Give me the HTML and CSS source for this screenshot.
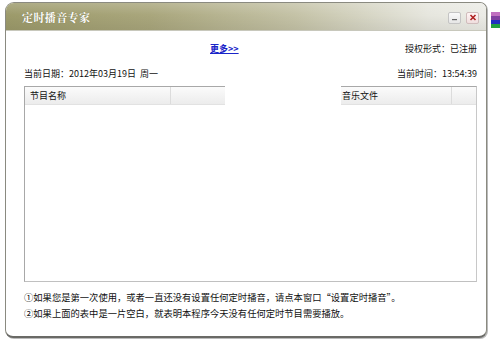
FILE: index.html
```html
<!DOCTYPE html>
<html lang="zh">
<head>
<meta charset="utf-8">
<link rel="stylesheet" href="styles.css">
</head>
<body>
<div class="desk">
  <div class="deskbits"><span></span><span></span><span></span><span></span></div>
  <div class="window">
    <div class="titlebar">
      <span class="title">定时播音专家</span>
      <div class="tbtns">
        <span class="tbtn min"><svg width="10" height="9" viewBox="0 0 10 9"><rect x="2" y="6" width="5" height="1.2" fill="#666"/></svg></span>
        <span class="tbtn close"><svg width="10" height="9" viewBox="0 0 10 9"><path d="M2.5 2 L7.5 7 M7.5 2 L2.5 7" stroke="#b02020" stroke-width="1.6"/></svg></span>
      </div>
    </div>
    <div class="body">
      <div class="row r1">
        <a class="more" href="#">更多&gt;&gt;</a>
        <span>授权形式：已注册</span>
      </div>
      <div class="row r2">
        <span>当前日期：2012年03月19日&nbsp;&nbsp;周一</span>
        <span>当前时间：13:54:39</span>
      </div>
      <div class="table">
        <div class="thead">
          <div class="th c1">节目名称</div>
          <div class="th c2">音乐文件</div>
          <div class="th c3"></div>
        </div>
        <div class="blank"></div>
      </div>
      <div class="notes">
        <p>①如果您是第一次使用，或者一直还没有设置任何定时播音，请点本窗口“设置定时播音”。</p>
        <p>②如果上面的表中是一片空白，就表明本程序今天没有任何定时节目需要播放。</p>
      </div>
    </div>
  </div>
</div>
</body>
</html>
```
FILE: styles.css
```css
html, body {
  margin: 0;
  padding: 0;
  background: #ffffff;
}
body {
  width: 500px;
  height: 343px;
  overflow: hidden;
  font-family: "Noto Sans CJK SC", "DejaVu Sans", sans-serif;
  font-size: 9px;
  color: #111;
}
.desk {
  position: relative;
  width: 500px;
  height: 343px;
  padding: 2px 0 0 5px;
  box-sizing: border-box;
}
.deskbits {
  position: absolute;
  left: 491px;
  top: 12px;
  width: 9px;
  display: flex;
  flex-direction: column;
}
.deskbits span { height: 4px; display: block; }
.deskbits span:nth-child(1) { background: #c070c0; }
.deskbits span:nth-child(2) { background: #8040a0; }
.deskbits span:nth-child(3) { background: #2030c0; }
.deskbits span:nth-child(4) { background: #20a040; }
.window {
  width: 482px;
  height: 336px;
  box-sizing: border-box;
  border: 1px solid #8a8a80;
  border-bottom: 2px solid #6a6a66;
  border-radius: 9px 7px 8px 8px;
  background: #fff;
  display: flex;
  flex-direction: column;
  overflow: hidden;
  box-shadow: 1px 1px 0 #bbb;
}
.titlebar {
  height: 27px;
  flex: none;
  display: flex;
  align-items: center;
  justify-content: space-between;
  padding: 0 7px 0 16px;
  background:
    linear-gradient(to bottom, rgba(255,255,255,0.18), rgba(255,255,255,0) 45%, rgba(0,0,0,0.06)),
    linear-gradient(to right, #9c9a6a 0%, #a9a67c 30%, #c4c2a6 60%, #e6e6de 88%, #ececE6 100%);
  border-bottom: 1px solid #c8c8bc;
}
.title {
  color: #fff;
  font-family: "Noto Serif CJK SC", "Noto Sans CJK SC", serif;
  font-weight: bold;
  font-size: 11px;
  letter-spacing: 0.4px;
  text-shadow: 0 0 1px rgba(80,80,40,0.5);
}
.tbtns {
  display: flex;
  gap: 5px;
  margin-top: 2px;
}
.tbtn {
  width: 11px;
  height: 10px;
  border: 1px solid #c4c4c4;
  border-radius: 2px;
  display: flex;
  align-items: center;
  justify-content: center;
  background: linear-gradient(#fafafa, #e6e6e6);
}
.tbtn.close {
  background: linear-gradient(#fff4f4, #f0dede);
  border-color: #d0bcbc;
}
.body {
  flex: 1;
  display: flex;
  flex-direction: column;
  padding: 11px 9px 0 18px;
}
.row {
  display: flex;
  justify-content: space-between;
  align-items: center;
  height: 14px;
  line-height: 14px;
  white-space: nowrap;
}
.r1 { padding-left: 186px; }
.r2 { margin-top: 11px; }
.more {
  color: #1a24c8;
  font-weight: bold;
  text-decoration: underline;
}
.table {
  position: relative;
  margin-top: 5px;
  height: 196px;
  box-sizing: border-box;
  border: 1px solid #a8a8a8;
  border-right-color: #c8c8c8;
  border-bottom-color: #c0c0c0;
  display: flex;
  flex-direction: column;
}
.thead {
  display: flex;
  height: 17px;
  background: linear-gradient(#fbfbfb, #ececec);
  border-bottom: 1px solid #e2e2e2;
}
.th {
  line-height: 17px;
  padding-left: 5px;
  box-sizing: border-box;
  border-right: 1px solid #dcdcdc;
}
.c1 { width: 146px; }
.c2 { width: 281px; padding-left: 171px; }
.c3 { flex: 1; border-right: none; }
.blank {
  position: absolute;
  left: 200px;
  top: -2px;
  width: 116px;
  height: 20px;
  background: #fff;
}
.notes {
  margin-top: 7px;
  font-size: 9.3px;
}
.notes p {
  margin: 0;
  height: 16px;
  line-height: 16px;
  white-space: nowrap;
}
```
